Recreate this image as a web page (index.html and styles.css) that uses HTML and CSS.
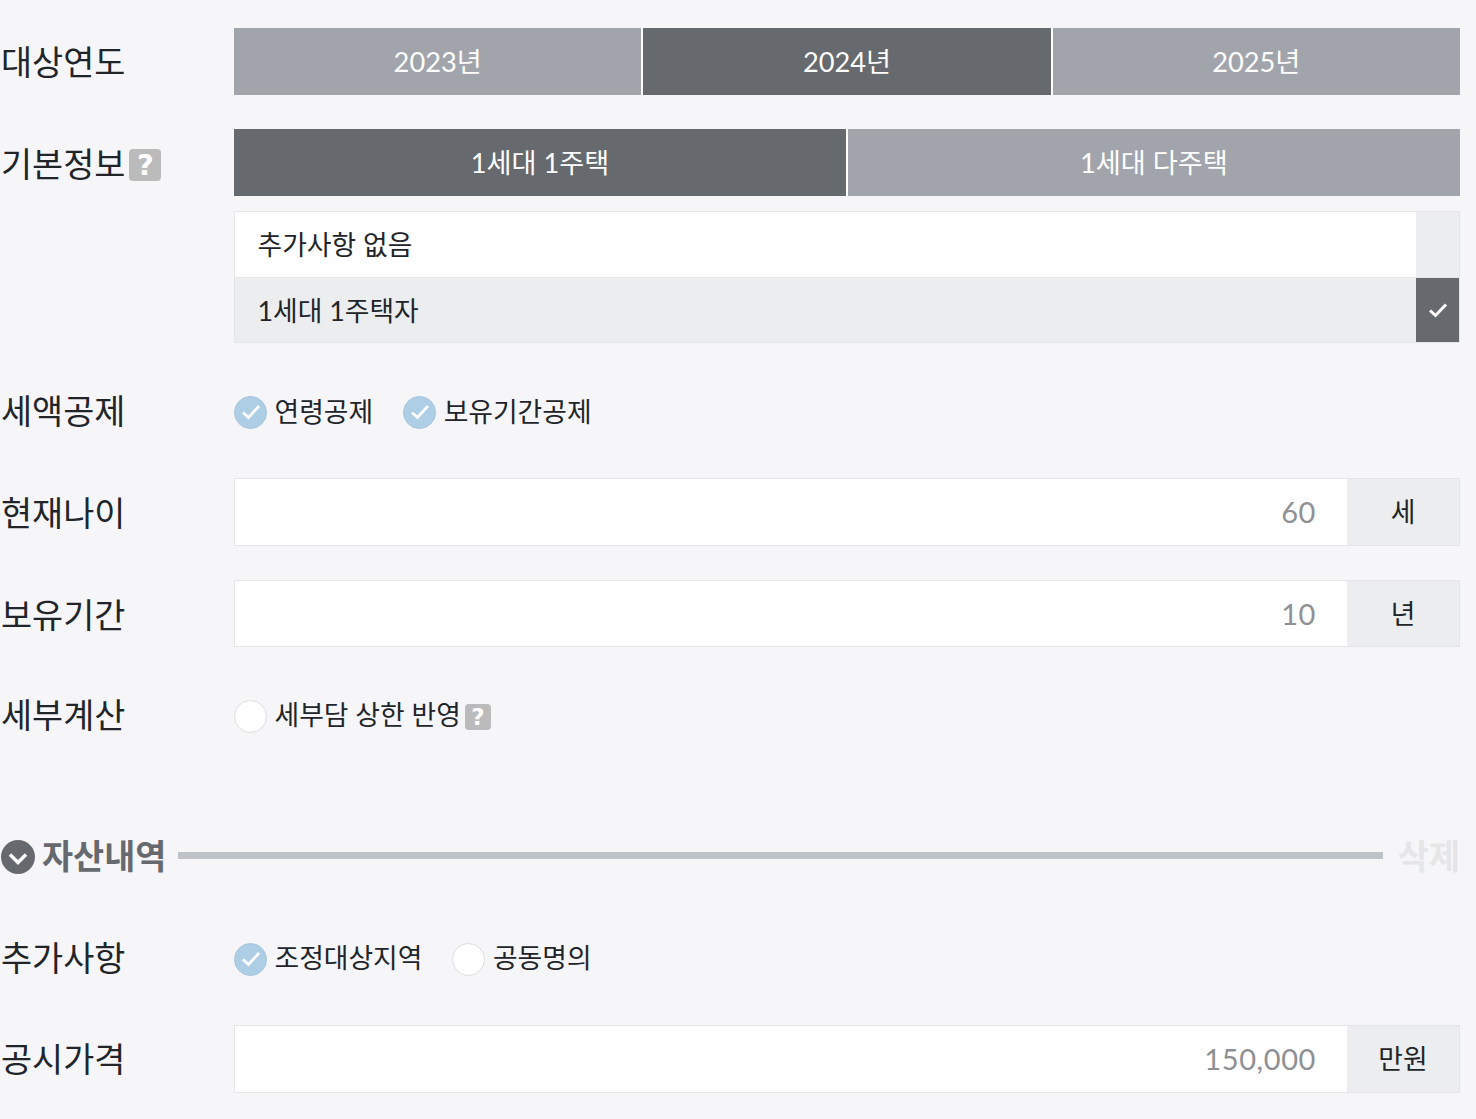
FILE: index.html
```html
<!DOCTYPE html>
<html lang="ko">
<head>
  <meta charset="UTF-8" />
  <title>양도소득세 계산기</title>
  <link rel="stylesheet" href="styles.css">
</head>
<body>

<main class="calc">
  <div class="row row-year">
    <div class="label">대상연도</div>
    <div class="field">
      <div class="tabs">
        <div class="tab">2023년</div>
        <div class="tab active">2024년</div>
        <div class="tab">2025년</div>
      </div>
    </div>
  </div>

  <div class="row row-basic">
    <div class="label">기본정보<span class="help">?</span></div>
    <div class="field">
      <div class="tabs">
        <div class="tab active">1세대 1주택</div>
        <div class="tab">1세대 다주택</div>
      </div>
      <div class="options">
        <div class="option">
          <span class="option-text">추가사항 없음</span>
          <span class="option-mark"></span>
        </div>
        <div class="option selected">
          <span class="option-text">1세대 1주택자</span>
          <span class="option-mark">
            <svg width="20" height="16" viewBox="0 0 20 16"><path d="M2 8.5l5.5 5L18 2.5" fill="none" stroke="#fff" stroke-width="3"/></svg>
          </span>
        </div>
      </div>
    </div>
  </div>

  <div class="row row-check row-tax">
    <div class="label">세액공제</div>
    <div class="field checks">
      <label class="check on"><span class="dot"><svg width="22" height="18" viewBox="0 0 22 18"><path d="M3 9.5l5.5 5L19 3" fill="none" stroke="#fff" stroke-width="2.8"/></svg></span>연령공제</label>
      <label class="check on"><span class="dot"><svg width="22" height="18" viewBox="0 0 22 18"><path d="M3 9.5l5.5 5L19 3" fill="none" stroke="#fff" stroke-width="2.8"/></svg></span>보유기간공제</label>
    </div>
  </div>

  <div class="row row-input row-age">
    <div class="label">현재나이</div>
    <div class="field input-group">
      <div class="value">60</div>
      <div class="unit">세</div>
    </div>
  </div>

  <div class="row row-input row-hold">
    <div class="label">보유기간</div>
    <div class="field input-group">
      <div class="value">10</div>
      <div class="unit">년</div>
    </div>
  </div>

  <div class="row row-check row-detail">
    <div class="label">세부계산</div>
    <div class="field checks">
      <label class="check"><span class="dot"></span>세부담 상한 반영<span class="help small">?</span></label>
    </div>
  </div>

  <div class="section">
    <span class="section-icon">
      <svg width="22" height="14" viewBox="0 0 22 14"><path d="M3 2.5l8 8 8-8" fill="none" stroke="#fff" stroke-width="3.4"/></svg>
    </span>
    <span class="section-title">자산내역</span>
    <span class="section-line"></span>
    <span class="section-del">삭제</span>
  </div>

  <div class="row row-check row-extra">
    <div class="label">추가사항</div>
    <div class="field checks">
      <label class="check on"><span class="dot"><svg width="22" height="18" viewBox="0 0 22 18"><path d="M3 9.5l5.5 5L19 3" fill="none" stroke="#fff" stroke-width="2.8"/></svg></span>조정대상지역</label>
      <label class="check"><span class="dot"></span>공동명의</label>
    </div>
  </div>

  <div class="row row-input row-price">
    <div class="label">공시가격</div>
    <div class="field input-group">
      <div class="value">150,000</div>
      <div class="unit">만원</div>
    </div>
  </div>
</main>

</body>
</html>
```

FILE: styles.css
```css
* {
  box-sizing: border-box;
}
html, body {
  margin: 0;
  padding: 0;
}
body {
  background-color: #f6f6f9;
  color: #212529;
  font-family: Lato, "Noto Sans CJK KR", sans-serif;
  overflow: hidden;
}
.calc {
  width: 1460px;
  padding-top: 28px;
}
.row {
  display: flex;
  align-items: flex-start;
}
.label {
  flex: 0 0 234px;
  height: 67px;
  display: flex;
  align-items: center;
  padding: 2px 0 0 1px;
  font-size: 33.8px;
  line-height: 60px;
  white-space: nowrap;
}
.row-year .label,
.row-price .label {
  padding-top: 0;
}
.field {
  flex: 1;
  min-width: 0;
}
.help {
  display: block;
  width: 32px;
  height: 32px;
  margin-top: 2px;
  margin-left: 4px;
  border-radius: 4px;
  background-color: #bbbbbb;
  color: #fff;
  font-family: "DejaVu Sans", sans-serif;
  font-size: 29px;
  font-weight: bold;
  line-height: 32px;
  text-align: center;
}
.help.small {
  width: 26px;
  height: 26px;
  margin-top: 4px;
  margin-left: 4px;
  font-size: 23px;
  line-height: 26px;
}

/* tabs */
.row-basic {
  margin-top: 34px;
}
.tabs {
  display: flex;
  gap: 2px;
  background-color: #fff;
}
.tab {
  flex: 1;
  height: 67px;
  background-color: #a1a5ab;
  color: #fff;
  font-size: 27.2px;
  line-height: 67px;
  text-align: center;
}
.tab.active {
  background-color: #66696e;
}

/* option list */
.options {
  margin-top: 15px;
  border: 1px solid #e4e5e7;
  background-color: #fff;
}
.option {
  display: flex;
  height: 65px;
}
.option.selected {
  height: 65px;
  border-top: 1px solid #e4e5e7;
  background-color: #ecedef;
}
.option-text {
  flex: 1;
  padding-left: 22.5px;
  font-size: 26.8px;
  line-height: 67px;
}
.option-mark {
  flex: 0 0 43px;
  display: flex;
  align-items: center;
  justify-content: center;
  background-color: #ecedef;
}
.selected .option-mark {
  background-color: #66696e;
}

/* check items */
.row-check .label {
  height: 34px;
  padding: 0 0 2px 1px;
  line-height: 32px;
}
.checks {
  display: flex;
  gap: 30px;
  height: 34px;
  align-items: center;
}
.check {
  display: flex;
  align-items: center;
  font-size: 26.8px;
  line-height: 34px;
  white-space: nowrap;
}
.dot {
  width: 33px;
  height: 33px;
  margin-right: 7.5px;
  border: 1px solid #dddddd;
  border-radius: 50%;
  background-color: #fff;
  display: flex;
  align-items: center;
  justify-content: center;
}
.check.on .dot {
  border-color: #a3c5dd;
  background-color: #aecee5;
}
.row-tax {
  margin-top: 52px;
}
.row-detail {
  margin-top: 52px;
}
.row-extra {
  margin-top: 64px;
}
.row-detail .checks,
.row-extra .checks {
  margin-top: -1px;
}
.row-detail .dot,
.row-extra .dot {
  margin-top: 2px;
}

/* number inputs */
.input-group {
  display: flex;
  height: 68px;
  border: 1px solid #e4e5e7;
  background-color: #fff;
}
.row-input .label {
  height: 68px;
}
.value {
  flex: 1;
  padding-right: 31px;
  color: #8e9094;
  font-size: 29px;
  letter-spacing: 0.6px;
  line-height: 66px;
  text-align: right;
}
.unit {
  flex: 0 0 112px;
  background-color: #ecedef;
  font-size: 26.8px;
  line-height: 66px;
  text-align: center;
}
.row-age {
  margin-top: 49px;
}
.row-hold {
  margin-top: 34px;
}
.row-hold .input-group,
.row-hold .label {
  height: 67px;
}
.row-price {
  margin-top: 49px;
}

/* section heading */
.section {
  display: flex;
  align-items: center;
  height: 44px;
  margin-top: 101px;
}
.section-icon {
  width: 34px;
  height: 34px;
  margin-top: 2px;
  margin-left: 1px;
  border-radius: 50%;
  background-color: #66696e;
  display: flex;
  align-items: center;
  justify-content: center;
}
.section-icon svg {
  margin-top: 3px;
}
.section-title {
  margin-left: 7px;
  color: #66696e;
  font-size: 33.8px;
  font-weight: bold;
  line-height: 44px;
}
.section-line {
  flex: 1;
  height: 7px;
  margin: 0 15px 2px 12px;
  background-color: #bfc2c7;
}
.section-del {
  color: #e5e6e8;
  font-size: 33.8px;
  font-weight: bold;
  line-height: 44px;
}
```
